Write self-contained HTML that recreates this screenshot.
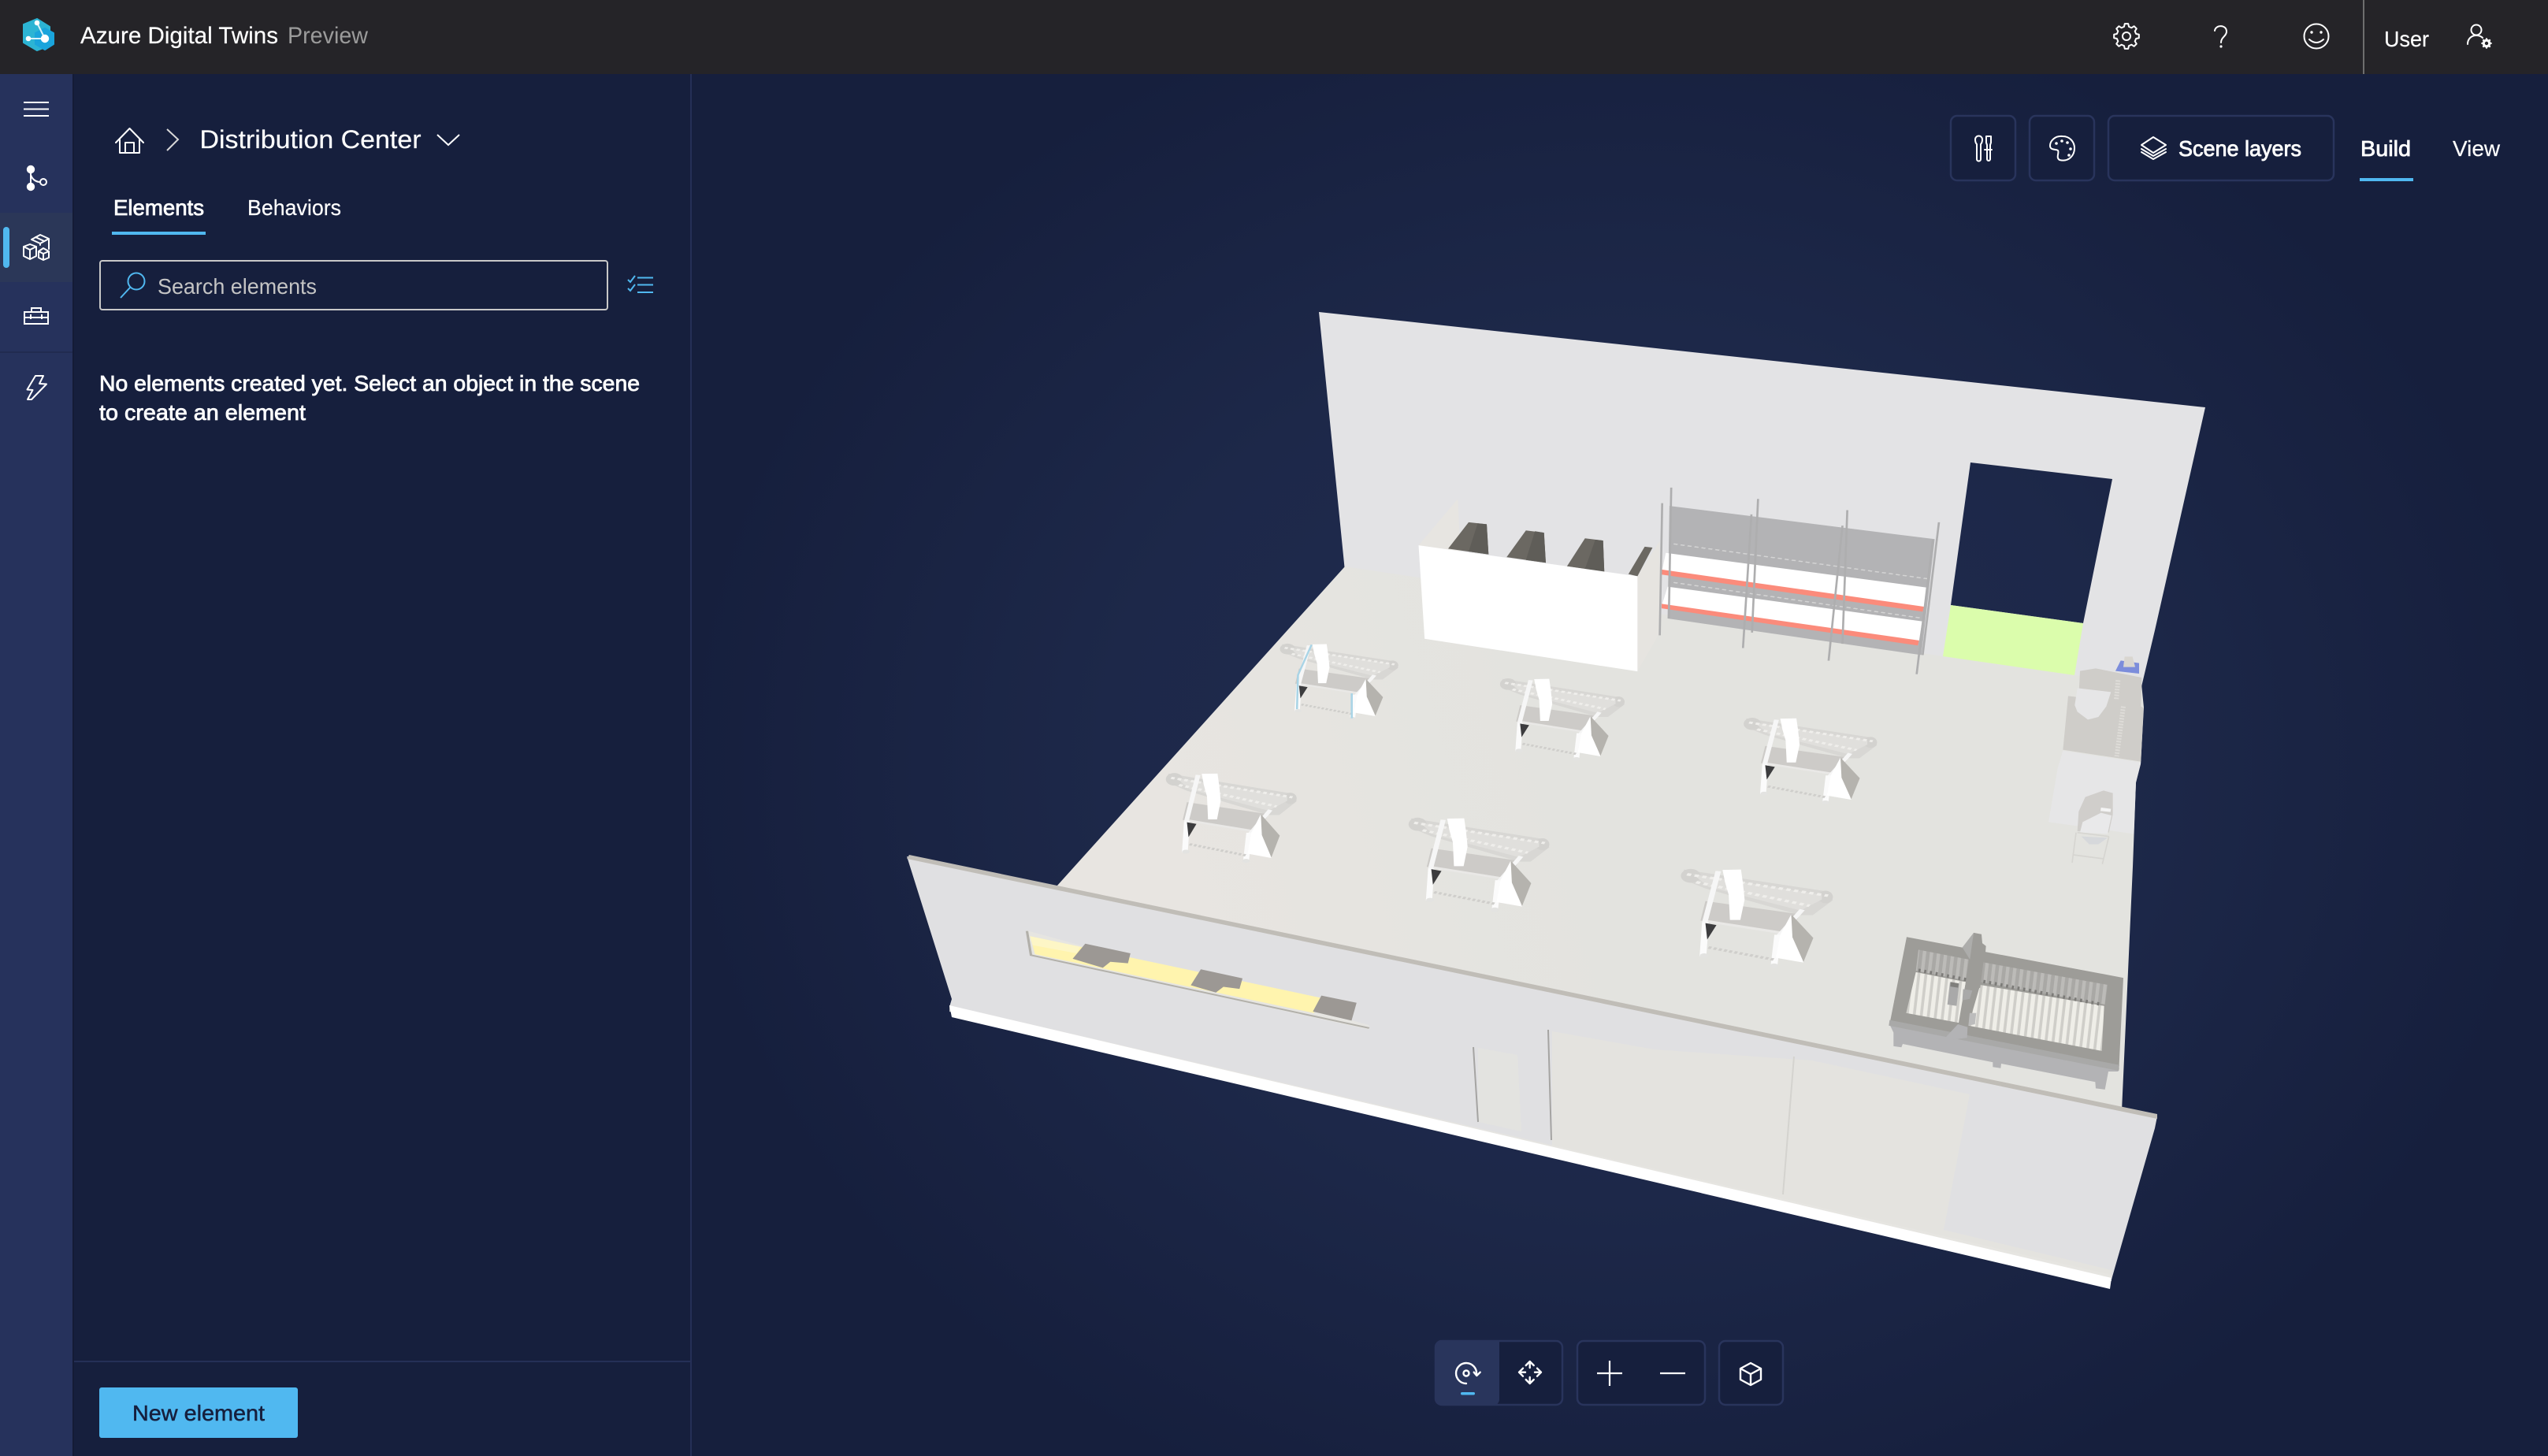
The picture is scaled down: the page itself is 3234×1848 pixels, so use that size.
<!DOCTYPE html>
<html lang="en"><head><meta charset="utf-8"><title>Azure Digital Twins</title>
<style>
html,body{margin:0;padding:0;background:#161f3d;width:3234px;height:1848px;overflow:hidden}
svg{display:block;position:absolute;left:0;top:0}
text{font-family:"Liberation Sans",sans-serif;fill:#fff;stroke:#fff;stroke-width:.2px}
text.sb{stroke:#fff;stroke-width:.8px}
.i{fill:none;stroke:#fff;stroke-width:2;stroke-linecap:round;stroke-linejoin:round}
.ic{fill:none;stroke:#fff;stroke-width:2.4;stroke-linejoin:round}
.b{fill:none;stroke:#50b8f0;stroke-width:2}
.btn{fill:#161f3d;stroke:#29345c;stroke-width:2.5}
</style></head><body>
<svg width="3234" height="1848" viewBox="0 0 3234 1848" xmlns="http://www.w3.org/2000/svg">
<defs>
<radialGradient id="bg" gradientUnits="userSpaceOnUse" cx="2050" cy="970" r="1180" gradientTransform="translate(2050 970) scale(1 .85) translate(-2050 -970)">
<stop offset="0" stop-color="#202c51"/><stop offset=".55" stop-color="#1d2849"/><stop offset="1" stop-color="#161f3d"/></radialGradient>
<linearGradient id="fl" gradientUnits="userSpaceOnUse" x1="1450" y1="1050" x2="1950" y2="900"><stop offset="0" stop-color="#e8e5e1"/><stop offset="1" stop-color="#e3e3df"/></linearGradient>
<pattern id="sg" width="27" height="40" patternUnits="userSpaceOnUse" patternTransform="skewX(-7)"><rect width="27" height="40" fill="#a9a8a5"/><rect width="13" height="40" fill="#bcbbb8"/></pattern>
<pattern id="sw" width="27" height="40" patternUnits="userSpaceOnUse" patternTransform="skewX(-7)"><rect width="27" height="40" fill="#cfcec9"/><rect width="16" height="40" fill="#efeee8"/></pattern>
<path id="gear" d="M12.13-3.02L15.84-2.23L15.84 2.23L12.13 3.02L10.71 6.44L12.78 9.62L9.62 12.78L6.44 10.71L3.02 12.13L2.23 15.84L-2.23 15.84L-3.02 12.13L-6.44 10.71L-9.62 12.78L-12.78 9.62L-10.71 6.44L-12.13 3.02L-15.84 2.23L-15.84-2.23L-12.13-3.02L-10.71-6.44L-12.78-9.62L-9.62-12.78L-6.44-10.71L-3.02-12.13L-2.23-15.84L2.23-15.84L3.02-12.13L6.44-10.71L9.62-12.78L12.78-9.62L10.71-6.44Z"/>
<g id="st">
<polygon points="795,305 1030,375 1038,402 1005,450 985,450 830,365 792,335" fill="#d8d7d4"/>
<ellipse cx="806" cy="325" rx="16" ry="22" fill="#d3d2cf"/><ellipse cx="1026" cy="392" rx="12" ry="20" fill="#d3d2cf"/>
<polygon points="810,320 1020,385 1020,400 985,435 835,360" fill="#e0dfdc"/>
<path d="M800 320L1030 388M815 345L1000 420" stroke="#efeeeb" stroke-width="8" stroke-dasharray="7 6" fill="none"/>
<polygon points="830,405 985,447 965,507 822,467" fill="#cdcbc8"/>
<polygon points="832,465 965,505 962,512 830,472" fill="#e9e8e6"/>
<polygon points="858,306 888,305 891,345 894,400 887,465 870,465 868,385 862,345" fill="#fff"/>
<path d="M851 310L829 472M988 432L950 515" stroke="#f6f6f6" stroke-width="9" fill="none"/>
<path d="M830 472L826 580M948 512L942 610" stroke="#fbfbfb" stroke-width="11" fill="none"/>
<path d="M835 552L945 592" stroke="#cfcecb" stroke-width="8" stroke-dasharray="5 4" fill="none"/>
<polygon points="830,475 848,481 833,527" fill="#3c3c3e"/>
<polygon points="970,447 952,512 945,585 990,600 975,520" fill="#fff"/>
<polygon points="970,447 1006,522 990,598 972,520" fill="#b5b3ae"/>
<circle cx="828" cy="578" r="7" fill="#e3e3e1"/><circle cx="942" cy="610" r="7" fill="#e3e3e1"/>
</g>
</defs>

<!-- base -->
<rect width="3234" height="1848" fill="#161f3d"/>
<rect x="878" y="94" width="2356" height="1754" fill="url(#bg)"/>

<!-- 3D scene -->
<path fill="#e3e3e5" fill-rule="evenodd" d="M1674 396L2799 517L2735 800L2716 880L1707 725ZM2501 587L2681 608L2644 791L2476 768Z"/>
<polygon points="1707,719 2466,833 2633,857 2718,868 2721,898 2717,970 2711,993 2707,1100 2693,1410 1341,1125" fill="url(#fl)"/>
<polygon points="2476,768 2644,791 2633,857 2466,833" fill="#dbfdac"/>

<!-- bin box & shelves : zoom4 coords -->
<g transform="translate(1600 360) scale(.76531 .35714)">
<polygon points="262,930 327,765 332,975" fill="#e7e5e1"/>
<polygon points="625,1040 662,915 662,1240 625,1378" fill="#e6e4e0"/>
<polygon points="345,848 375,855 378,962 311,942" fill="#6b6862"/>
<polygon points="360,852 375,855 378,962 345,952" fill="#5f5d58"/>
<polygon points="440,877 470,885 473,992 408,972" fill="#6b6862"/>
<polygon points="455,880 470,885 473,992 440,982" fill="#5f5d58"/>
<polygon points="538,905 568,913 570,1024 508,1005" fill="#6b6862"/>
<polygon points="555,910 568,913 570,1024 538,1014" fill="#5f5d58"/>
<polygon points="637,935 650,938 625,1040 610,1032" fill="#6b6862"/>
<polygon points="262,930 625,1040 625,1378 272,1262" fill="#fff"/>
<polygon points="678,790 1118,908 1096,1320 675,1190" fill="#b3b3b5"/>
<polygon points="672,957 1105,1080 1100,1150 666,1018" fill="#fff"/>
<polygon points="665,1016 1100,1148 1098,1166 665,1034" fill="#fb8b7b"/>
<polygon points="675,1077 1097,1200 1092,1270 666,1140" fill="#fff"/>
<polygon points="665,1138 1092,1268 1090,1286 665,1154" fill="#fb8b7b"/>
<path d="M685 925L1110 1050M685 1062L1100 1190" stroke="#d4d4d4" stroke-width="4" stroke-dasharray="7 5" fill="none"/>
<g stroke="#aeaeaf" stroke-width="3.500" fill="none">
<path d="M681 725L677 1190M666 780L662 1250M825 765L815 1240M814 820L800 1295M973 805L965 1280M965 860L942 1340M1125 848L1098 1320M1115 910L1088 1388"/>
</g>
</g>

<!-- workstations : zoom5 coords -->
<g transform="translate(1400 760) scale(.63776 .33333)">
<use href="#st" transform="translate(352 168) scale(.95 .93) translate(-790 -300)"/>
<use href="#st"/>
<use href="#st" transform="translate(1275 450) scale(1.07 1.05) translate(-790 -300)"/>
<use href="#st" transform="translate(125 660) scale(1.05 1.09) translate(-790 -300)"/>
<use href="#st" transform="translate(608 830) scale(1.13 1.14) translate(-790 -300)"/>
<use href="#st" transform="translate(1150 1025) scale(1.22 1.2) translate(-790 -300)"/>
<path d="M415 175L388 290L386 420M495 360L495 455" stroke="#a9d4e6" stroke-width="4" fill="none"/>
</g>

<!-- counter area : zoom12 coords -->
<g transform="translate(2580 800) scale(.33333)">
<polygon points="315,155 335,115 405,125 405,165" fill="#7c8ddb"/>
<polygon points="350,100 380,100 390,140 345,140" fill="#d9d6d0"/>
<polygon points="115,458 412,503 393,580 385,775 60,730 95,525" fill="#e6e6e7"/>
<polygon points="180,155 240,145 415,180 412,290 422,295 412,500 115,455 135,250 175,255" fill="#cfcdc9"/>
<polygon points="170,220 298,235 280,290 250,330 210,340 170,310 160,285" fill="#e6e6e7"/>
<path d="M325 190L318 265M345 290L320 480" stroke="#dedcd8" stroke-width="18" stroke-dasharray="6 5" fill="none"/>
<polygon points="175,690 200,635 270,610 305,620 305,700 290,770 170,765" fill="#d0cecb"/>
<polygon points="190,730 260,695 300,705 285,775 180,770" fill="#e9e9ea"/>
<polygon points="260,675 298,680 296,692 258,688" fill="#f4f4f4"/>
<polygon points="185,785 285,790 250,815 215,815" fill="#d6d8db"/>
<path d="M165 770L150 885M290 785L265 890M155 855L270 870M170 770L290 785" stroke="#d6d5d1" stroke-width="5" fill="none"/>
</g>

<!-- CNC : zoom8 coords -->
<g transform="translate(2300 1100) scale(.33333 .35714)">
<polygon points="295,560 1170,715 1165,728 1128,728 1115,792 1080,788 1078,765 720,700 718,716 688,712 688,695 345,630 340,642 310,638 310,590" fill="#b3b3b5"/>
<polygon points="360,250 1185,395 1168,725 295,560" fill="#9d9c98"/>
<polygon points="295,545 1170,705 1166,725 292,565" fill="#a9a9a8"/>
<polygon points="405,295 597,330 585,405 395,370" fill="url(#sg)"/>
<polygon points="395,375 585,410 560,555 358,520" fill="url(#sw)"/>
<polygon points="652,340 1125,420 1115,490 640,410" fill="url(#sg)"/>
<polygon points="640,420 1112,495 1103,655 595,565" fill="url(#sw)"/>
<path d="M405 368L590 402M652 408L1105 490" stroke="#7c7b78" stroke-width="12" stroke-dasharray="8 14" fill="none"/>
<polygon points="525,410 560,415 550,495 515,490" fill="#a9a9a9"/>
<polygon points="528,410 558,415 556,430 526,426" fill="#807f7c"/>
<polygon points="572,287 615,235 604,335" fill="#adadab"/>
<polygon points="615,235 645,240 648,272 662,282 660,305 652,340 640,430 612,440 610,472 580,478 590,570 558,555 572,478 600,335" fill="#9d9c98"/>
<polygon points="600,520 625,520 620,560 595,565" fill="#bcbcbc"/>
<polygon points="575,435 610,440 600,470 572,475" fill="#a9a9a9"/>
<polygon points="555,560 592,570 590,608 495,620" fill="#b3b3b5"/>
</g>

<!-- front wall -->
<polygon points="1151,1087 2738,1417 2735,1432 2680,1624 1205,1278 1208,1268" fill="#e0e0e2"/>
<polygon points="1970,1309 2100,1332 2300,1346 2500,1389 2467,1561 2680,1612 2680,1622 1970,1456" fill="#e4e3df"/>
<polygon points="1876,1330 1926,1339 1931,1436 1876,1424" fill="#e3e3e0"/>
<polygon points="1205,1276 2680,1618 2680,1626 1205,1284" fill="#e6e5e1" opacity=".8"/>
<polygon points="1205,1276 2680,1622 2678,1636 1208,1291" fill="#fff"/>
<polygon points="1154,1085 2738,1414 2738,1420 1151,1090" fill="#c0bdb7"/>
<path d="M1870 1329L1876 1424M1965 1307L1969 1447" stroke="#a5a4a2" stroke-width="2" fill="none"/>
<path d="M2277 1341L2263 1516" stroke="#d4d3cf" stroke-width="2" fill="none"/>

<!-- front window : zoom7 coords -->
<g transform="translate(1100 1060) scale(.63776 .38265)">
<polygon points="318,316 1000,630 1000,645 327,398" fill="#e6e5e1"/>
<polygon points="325,335 905,540 890,590 335,395" fill="#fff4ae"/>
<polygon points="325,335 425,370 418,392 330,365" fill="#fdf6c6"/>
<path d="M319 318L327 398L1000 640" stroke="#b2b0aa" stroke-width="5" fill="none"/>
<polygon points="435,360 525,392 520,425 485,420 470,440 410,410" fill="#9c9894"/>
<polygon points="665,445 748,475 742,510 710,503 695,522 645,498" fill="#9c9894"/>
<polygon points="905,532 975,556 965,615 888,585" fill="#9c9894"/>
</g>

<!-- header -->
<rect width="3234" height="94" fill="#252428"/>
<polygon points="47,24 63,34 63,58 47,64 30,54 30,31" fill="#2cb4d4" stroke="#2cb4d4" stroke-width="2" stroke-linejoin="round"/>
<polygon points="57,36 68,42 68,56 57,63 45,56 45,42" fill="#1aa4dc" stroke="#1aa4dc" stroke-width="2" stroke-linejoin="round"/>
<path d="M47 29L57 49L36 49" fill="none" stroke="#d8f2fa" stroke-width="2"/>
<circle cx="47" cy="29" r="3.300" fill="#fff"/><circle cx="36" cy="49" r="3.300" fill="#fff"/><circle cx="57" cy="49" r="5.200" fill="#fff"/>
<text x="102" y="55" font-size="30" textLength="251" lengthAdjust="spacingAndGlyphs">Azure Digital Twins</text>
<text x="365" y="55" font-size="30" textLength="102" lengthAdjust="spacingAndGlyphs" style="fill:#9b9b9b;stroke:none">Preview</text>
<use href="#gear" transform="translate(2699 46)" class="i"/>
<circle cx="2699" cy="46" r="5" class="i"/>
<path class="i" stroke-width="2.400" d="M2811 39C2812 31 2826 31 2826 40C2826 46 2819 47 2819 54"/><circle cx="2819" cy="59" r="1.600" fill="#fff"/>
<circle cx="2940" cy="46" r="15.500" class="i"/><circle cx="2934" cy="41" r="1.700" fill="#fff"/><circle cx="2946" cy="41" r="1.700" fill="#fff"/><path class="i" d="M2931 50Q2940 58 2949 50"/>
<rect x="2999" y="0" width="2" height="94" fill="#6e6e6e"/>
<text x="3026" y="59" font-size="28" textLength="57" lengthAdjust="spacingAndGlyphs">User</text>
<circle cx="3143" cy="38" r="6.500" class="i"/><path class="i" d="M3132 56C3132 49 3137 45 3143 45C3146 45 3149 46 3151 48"/>
<use href="#gear" transform="translate(3156 55) scale(.42)" fill="#fff"/><circle cx="3156" cy="55" r="2.200" fill="#252428"/>

<!-- sidebar -->
<rect x="0" y="94" width="92" height="1754" fill="#26325c"/>
<rect x="92" y="94" width="2" height="1754" fill="#141b36"/>
<rect x="0" y="270" width="92" height="88" fill="#2b3758"/>
<rect x="4" y="288" width="8" height="52" rx="4" fill="#50b8f0"/>
<rect x="0" y="446" width="92" height="2" fill="#212b50"/>
<path d="M30 130H62M30 138.500H62M30 147H62" stroke="#fff" stroke-width="2" fill="none"/>
<circle cx="39" cy="215" r="5.200" fill="#fff"/><circle cx="39" cy="237" r="5.200" fill="#fff"/><circle cx="55" cy="231" r="4" class="i"/>
<path class="i" d="M39 215V237M39 222C41 228 46 231 51 231"/>
<g class="i" stroke-width="1.800">
<path d="M30 313L38 310L46 313V325L38 329L30 325ZM30 313L38 317L46 313M38 317V329"/>
<path d="M49 319L55 315L62 319V327L55 330L49 327ZM49 319L55 322L62 319M55 322V330"/>
<path d="M40 304L51 298L62 303V316M40 304L51 309L62 303M51 309V311M45 301L56 306"/>
</g>
<path class="i" style="stroke-linecap:butt;stroke-linejoin:miter" d="M31 396H61V411H31ZM40 395V391H52V395M31 403H61M39 399V405M53 399V405"/>
<polygon class="i" points="45,477 55,477 50,487 59,487.500 40,507 35,507 41.500,495 34.500,494.500"/>

<!-- panel -->
<rect x="94" y="94" width="782" height="1754" fill="#161f3d"/>
<rect x="876" y="94" width="2" height="1754" fill="#252f57"/>
<rect x="94" y="1727" width="782" height="2" fill="#252f57"/>
<path class="i" d="M147 181L164.500 163L182 181M152 177V194H177V177M159 194V181H170V194"/>
<path d="M212 164L226 177L212 191" fill="none" stroke="#d8d8d8" stroke-width="2"/>
<text x="253.500" y="188" font-size="32" textLength="281" lengthAdjust="spacingAndGlyphs">Distribution Center</text>
<path d="M555 171L569 184L583 171" fill="none" stroke="#fff" stroke-width="2"/>
<text x="144" y="273" font-size="28" class="sb" textLength="115" lengthAdjust="spacingAndGlyphs">Elements</text>
<rect x="142" y="294" width="119" height="4" fill="#50b8f0"/>
<text x="314" y="273" font-size="28" textLength="119" lengthAdjust="spacingAndGlyphs">Behaviors</text>
<rect x="127" y="331" width="644" height="62" rx="3" fill="#161f3d" stroke="#c8c8c8" stroke-width="2"/>
<circle cx="173" cy="357" r="10.500" class="b"/><path class="b" d="M165 365L153 378"/>
<text x="200" y="373" font-size="28" textLength="202" lengthAdjust="spacingAndGlyphs" style="fill:#c4c4c4;stroke:none">Search elements</text>
<path class="b" d="M809 352.500H829M809 361.500H829M809 371H829"/>
<path class="b" d="M797 355L800 358L806 350M797 366L800 369L806 361"/>
<text x="126" y="496" font-size="28" class="sb" textLength="686" lengthAdjust="spacingAndGlyphs">No elements created yet. Select an object in the scene</text>
<text x="126" y="533" font-size="28" class="sb" textLength="262" lengthAdjust="spacingAndGlyphs">to create an element</text>
<rect x="126" y="1761" width="252" height="64" rx="3" fill="#50b8f0"/>
<text x="168" y="1803" font-size="28" textLength="168" lengthAdjust="spacingAndGlyphs" style="fill:#161f3d;stroke:#161f3d;stroke-width:.5px">New element</text>

<!-- top-right buttons -->
<rect x="2476" y="147" width="82" height="82" rx="8" class="btn"/>
<rect x="2576" y="147" width="82" height="82" rx="8" class="btn"/>
<rect x="2676" y="147" width="286" height="82" rx="8" class="btn"/>
<path class="i" d="M2507 177a4.500 4.500 0 0 1 9 0q0 4-2 6v19a2.500 2.500 0 0 1-5 0v-19q-2-2-2-6Z"/>
<path class="i" d="M2521 173h6v8l-1 3v18a2 2 0 0 1-4 0v-18l-1-3ZM2519 190h9"/>
<path class="i" d="M2618 173C2608 172 2602 179 2602 185C2602 191 2610 189 2612 191C2614 194 2609 200 2614 203C2626 206 2633 197 2633 188C2633 180 2627 173 2618 173Z"/>
<g fill="#fff"><circle cx="2610" cy="182" r="1.800"/><circle cx="2617" cy="179" r="1.800"/><circle cx="2624" cy="181" r="1.800"/><circle cx="2628" cy="189" r="1.800"/><circle cx="2626" cy="197" r="1.800"/></g>
<path class="i" stroke-width="2.200" d="M2733 174L2749 184L2733 194L2718 184ZM2718 189L2733 198L2749 189M2718 193L2733 202L2749 193"/>
<text x="2765" y="198" font-size="28" class="sb" textLength="156" lengthAdjust="spacingAndGlyphs">Scene layers</text>
<text x="2996" y="198" font-size="28" class="sb" textLength="64" lengthAdjust="spacingAndGlyphs">Build</text>
<rect x="2995" y="226" width="68" height="4" fill="#50b8f0"/>
<text x="3113" y="198" font-size="28" textLength="60" lengthAdjust="spacingAndGlyphs">View</text>

<!-- bottom controls -->
<rect x="1822" y="1702" width="161" height="81" rx="8" class="btn"/>
<path d="M1831 1702H1903V1776a8 8 0 0 1-8 8H1831a8 8 0 0 1-8-8V1710a8 8 0 0 1 8-8Z" fill="#29355c"/>
<rect x="2002" y="1702" width="162" height="81" rx="8" class="btn"/>
<rect x="2182" y="1702" width="81" height="81" rx="8" class="btn"/>
<path class="ic" stroke-linecap="round" d="M1861 1756A13 13 0 1 1 1874 1744M1870.700 1741.700L1874.300 1746L1878.700 1741.700"/>
<circle cx="1861" cy="1743" r="3.500" class="ic"/>
<rect x="1854" y="1767" width="18" height="3.500" rx="1.700" fill="#50b8f0"/>
<path class="ic" stroke-linecap="round" d="M1941.700 1728V1736M1936.700 1733L1941.700 1728L1946.700 1733M1941.700 1756V1748M1936.700 1751L1941.700 1756L1946.700 1751M1928 1741.700H1936M1933 1736.700L1928 1741.700L1933 1746.700M1956 1741.700H1948M1951 1736.700L1956 1741.700L1951 1746.700"/>
<path d="M2027 1743H2059M2043 1727V1759M2107 1743H2139" stroke="#fff" stroke-width="2.200" fill="none"/>
<path class="ic" d="M2222 1730L2235 1737V1751L2222 1758L2209 1751V1737ZM2209 1737L2222 1744L2235 1737M2222 1744V1758"/>
</svg>
</body></html>
